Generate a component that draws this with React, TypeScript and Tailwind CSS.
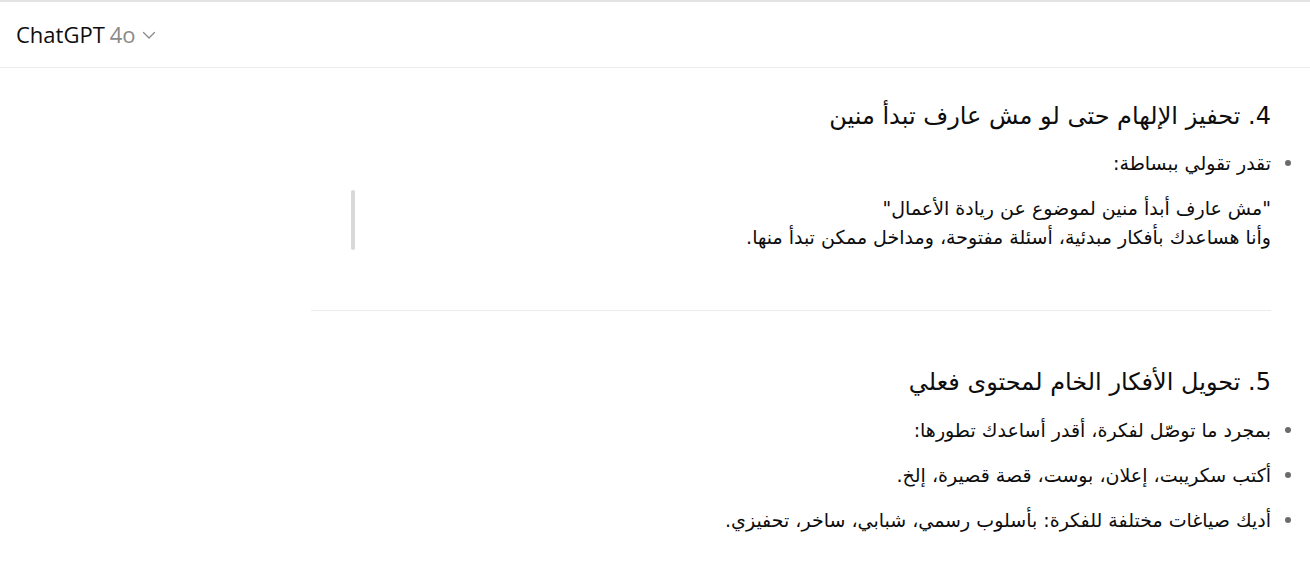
import React from "react";

const Dot = () => (
  <span className="absolute right-[-20px] top-[11px] w-[6px] h-[6px] rounded-full bg-[#6b6b6b]"></span>
);

export default function App() {
  const arabic = { fontFamily: '"DejaVu Sans", "Noto Sans Arabic", sans-serif' };
  return (
    <div className="w-[1310px] h-[570px] overflow-hidden bg-white border-t-2 border-[#e3e3e3]" style={{ fontFamily: '"Open Sans", "Noto Sans", sans-serif' }}>
      <header className="h-[66px] flex items-center px-4 border-b border-[#ececec]">
        <div className="flex items-center gap-[5px] text-[22px] text-[#0d0d0d]">
          <span>ChatGPT</span>
          <span className="text-[#8a8a8a]">4o</span>
          <svg width="16" height="16" viewBox="0 0 16 16" className="text-[#8a8a8a]" fill="none" stroke="currentColor" strokeWidth="1.3" strokeLinecap="round" strokeLinejoin="round">
            <path d="M2.5 5.5l5.5 5.5 5.5-5.5" />
          </svg>
        </div>
      </header>
      <main dir="rtl" className="ml-[311px] w-[960px] text-[#0d0d0d]" style={arabic}>
        <h3 className="pt-[32px] text-[24px] leading-[32px]">4. تحفيز الإلهام حتى لو مش عارف تبدأ منين</h3>
        <ul className="mt-[17px] list-none">
          <li className="relative text-[19px] leading-[28px]">
            <Dot />
            تقدر تقولي ببساطة:
          </li>
        </ul>
        <div dir="ltr" className="mt-[17px] flex pl-[40px]">
          <div className="w-[4px] h-[60px] mt-[-4px] rounded-full bg-[#d9d9d9] shrink-0"></div>
          <div dir="rtl" className="flex-1 text-[19px] leading-[29px]">
            <p>"مش عارف أبدأ منين لموضوع عن ريادة الأعمال"</p>
            <p>وأنا هساعدك بأفكار مبدئية، أسئلة مفتوحة، ومداخل ممكن تبدأ منها.</p>
          </div>
        </div>
        <hr className="mt-[58px] border-0 h-px bg-[#ececec]" />
        <h3 className="pt-[55px] text-[24px] leading-[32px]">5. تحويل الأفكار الخام لمحتوى فعلي</h3>
        <ul className="mt-[18px] list-none flex flex-col gap-[17px]">
          {[
            "بمجرد ما توصّل لفكرة، أقدر أساعدك تطورها:",
            "أكتب سكريبت، إعلان، بوست، قصة قصيرة، إلخ.",
            "أديك صياغات مختلفة للفكرة: بأسلوب رسمي، شبابي، ساخر، تحفيزي.",
          ].map((t) => (
            <li key={t} className="relative text-[19px] leading-[28px]">
              <Dot />
              {t}
            </li>
          ))}
        </ul>
      </main>
    </div>
  );
}
